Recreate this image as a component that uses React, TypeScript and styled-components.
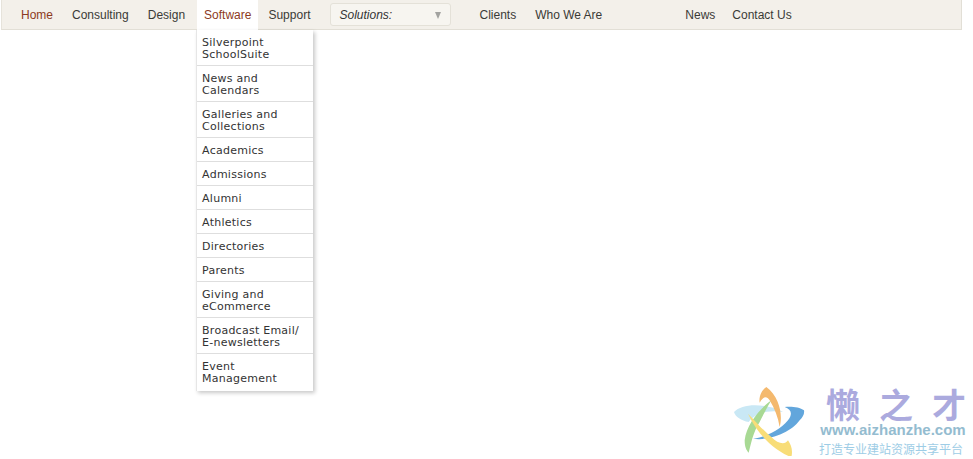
import React from "react"
import styled, { createGlobalStyle } from "styled-components"

const GlobalStyle = createGlobalStyle`
    html, body {
        margin: 0;
        padding: 0;
        background: #fff;
    }
    #root {
        min-height: 459px;
    }
`

const Page = styled.div`
    position: relative;
    width: 973px;
    height: 459px;
    overflow: hidden;
`

const NavBar = styled.nav`
    display: flex;
    align-items: stretch;
    box-sizing: border-box;
    width: 961px;
    height: 30px;
    margin-left: 1px;
    padding-left: 12px;
    background: #f3f0ea;
    border-bottom: 1px solid #e2dfd6;
    border-left: 1px solid #e6e3db;
    border-right: 1px solid #e2dfd6;
    font-family: "Liberation Sans", Arial, sans-serif;
    font-size: 12px;
`

const NavGroup = styled.div<{ $left?: number; $gap?: number }>`
    display: flex;
    align-items: stretch;
    gap: ${(p) => p.$gap ?? 5}px;
    margin-left: ${(p) => p.$left ?? 0}px;
`

const NavItem = styled.a<{ $active?: boolean; $open?: boolean }>`
    position: relative;
    display: flex;
    align-items: center;
    padding: 0 7px;
    height: 30px;
    margin-right: ${(p) => (p.$open ? "-2px" : "0")};
    color: ${(p) => (p.$active || p.$open ? "#8c3a22" : "#3a3a36")};
    background: ${(p) => (p.$open ? "#fff" : "transparent")};
    white-space: nowrap;
`

const SolutionSelect = styled.div`
    display: flex;
    align-items: center;
    justify-content: space-between;
    box-sizing: border-box;
    width: 121px;
    height: 23px;
    margin: 3px 0 0 13px;
    padding: 0 9px 0 8px;
    background: #f7f5f0;
    border: 1px solid #e4e1d8;
    border-radius: 3px;
    color: #333;
    font-style: italic;
`

const Caret = styled.span`
    width: 0;
    height: 0;
    margin-top: 2px;
    border-left: 3.5px solid transparent;
    border-right: 3.5px solid transparent;
    border-top: 7px solid #a3a3a0;
`

const Dropdown = styled.ul`
    position: absolute;
    top: 30px;
    left: -1px;
    width: 117px;
    box-sizing: border-box;
    margin: 0;
    padding: 0;
    list-style: none;
    background: #fff;
    border-left: 1px solid #e6e6e6;
    box-shadow: 2px 2px 4px rgba(0, 0, 0, 0.22);
    font-family: "DejaVu Sans", Verdana, sans-serif;
    font-size: 11px;
    line-height: 12px;
    letter-spacing: 0.25px;
    color: #333;
`

const DropdownItem = styled.li`
    padding: 7px 5px 4px;
    border-bottom: 1px solid #dedede;
    white-space: pre-line;
    &:last-child {
        border-bottom: none;
        padding-bottom: 6px;
    }
`

const Watermark = styled.div`
    position: absolute;
    left: 728px;
    top: 382px;
    display: flex;
    gap: 8px;
`

const LogoSvg = styled.svg`
    filter: blur(0.5px);
`

const WatermarkText = styled.div`
    display: flex;
    flex-direction: column;
    align-items: center;
    width: 146px;
    margin-top: 4px;
`

const WatermarkTitle = styled.div`
    display: flex;
    justify-content: space-between;
    align-self: flex-end;
    width: 140px;
    font-family: "Noto Sans CJK SC", sans-serif;
    font-weight: 700;
    font-size: 34px;
    line-height: 36px;
    color: #abaade;
`

const WatermarkUrl = styled.div`
    font-family: "Liberation Sans", Arial, sans-serif;
    font-weight: 700;
    font-size: 15px;
    line-height: 16px;
    color: #94bcd0;
    white-space: nowrap;
`

const WatermarkSlogan = styled.div`
    font-family: "Noto Sans CJK SC", sans-serif;
    font-size: 12px;
    line-height: 16px;
    margin: 3px 4px 0 0;
    color: #9ecde6;
    white-space: nowrap;
`

const softwareItems = [
    "Silverpoint\nSchoolSuite",
    "News and\nCalendars",
    "Galleries and\nCollections",
    "Academics",
    "Admissions",
    "Alumni",
    "Athletics",
    "Directories",
    "Parents",
    "Giving and\neCommerce",
    "Broadcast Email/\nE-newsletters",
    "Event\nManagement",
]

const StarLogo = () => (
    <LogoSvg width="84" height="74" viewBox="0 0 252 222" fill="none">
        <path d="M18 90C35 72 70 66 110 72C130 75 150 80 165 90C130 84 85 88 62 120C40 116 22 105 18 90Z" fill="#c9e8f5" />
        <path d="M228 85C215 75 190 73 170 75C190 82 195 95 180 115C155 145 115 165 75 170C125 178 190 150 215 115C225 105 230 95 228 85Z" fill="#62a6dc" />
        <path d="M130 55C90 85 55 130 50 175C50 195 55 205 62 212C68 190 75 150 95 120C105 100 118 75 130 55Z" fill="#a8d994" />
        <path d="M115 15C100 25 92 45 95 62C105 45 115 40 125 55C140 80 150 105 155 135C165 100 155 45 115 15Z" fill="#f4b96e" />
        <path d="M60 95C85 150 130 200 190 226C195 205 190 190 180 175C170 190 150 185 130 165C105 145 80 115 60 95Z" fill="#f8dd78" />
    </LogoSvg>
)

export default function App() {
    return (
        <Page>
            <GlobalStyle />
            <NavBar>
                <NavGroup>
                    <NavItem $active>Home</NavItem>
                    <NavItem>Consulting</NavItem>
                    <NavItem>Design</NavItem>
                    <NavItem $open>
                        Software
                        <Dropdown>
                            {softwareItems.map((item) => (
                                <DropdownItem key={item}>{item}</DropdownItem>
                            ))}
                        </Dropdown>
                    </NavItem>
                    <NavItem>Support</NavItem>
                </NavGroup>
                <SolutionSelect>
                    Solutions:
                    <Caret />
                </SolutionSelect>
                <NavGroup $left={21}>
                    <NavItem>Clients</NavItem>
                    <NavItem>Who We Are</NavItem>
                </NavGroup>
                <NavGroup $left={69} $gap={3}>
                    <NavItem>News</NavItem>
                    <NavItem>Contact Us</NavItem>
                </NavGroup>
            </NavBar>
            <Watermark>
                <StarLogo />
                <WatermarkText>
                    <WatermarkTitle>
                        <span>懒</span>
                        <span>之</span>
                        <span>才</span>
                    </WatermarkTitle>
                    <WatermarkUrl>www.aizhanzhe.com</WatermarkUrl>
                    <WatermarkSlogan>打造专业建站资源共享平台</WatermarkSlogan>
                </WatermarkText>
            </Watermark>
        </Page>
    )
}
